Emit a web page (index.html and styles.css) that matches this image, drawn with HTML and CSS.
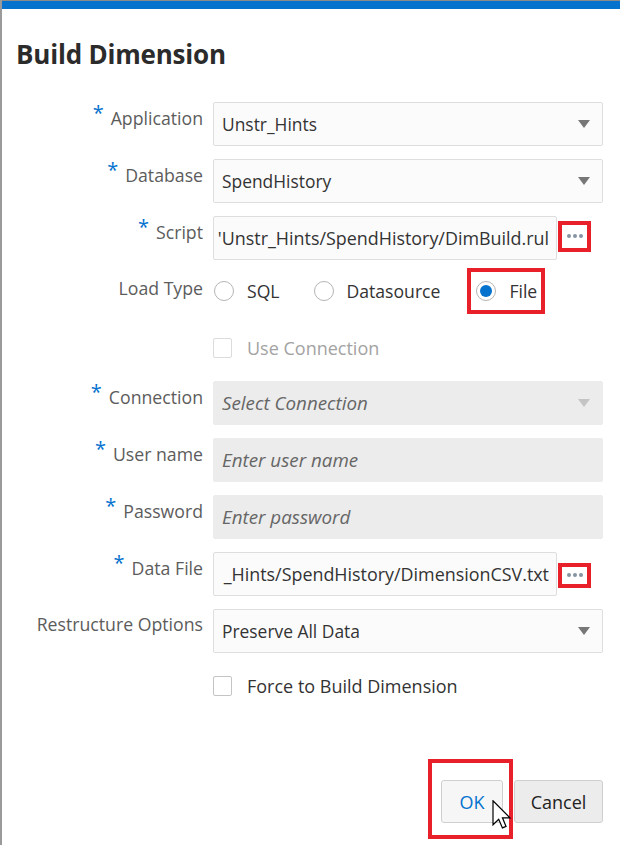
FILE: index.html
```html
<!DOCTYPE html>
<html>
<head>
<meta charset="utf-8">
<link rel="stylesheet" href="styles.css">
</head>
<body>
<div class="dialog">
  <div class="topbar"></div>
  <h1 class="title">Build Dimension</h1>
  <div class="form">
    <div class="row">
      <div class="label"><span class="req">*</span>Application</div>
      <div class="select"><span class="value">Unstr_Hints</span><span class="caret"></span></div>
    </div>
    <div class="row">
      <div class="label"><span class="req">*</span>Database</div>
      <div class="select"><span class="value">SpendHistory</span><span class="caret"></span></div>
    </div>
    <div class="row">
      <div class="label"><span class="req">*</span>Script</div>
      <div class="with-btn">
        <div class="input clip"><span class="value">'Unstr_Hints/SpendHistory/DimBuild.rul</span></div>
        <div class="ellipsis boxed"><span class="dot"></span><span class="dot"></span><span class="dot"></span></div>
      </div>
    </div>
    <div class="row row-radio">
      <div class="label label-plain">Load Type</div>
      <div class="radios">
        <label class="radio"><span class="circle"></span>SQL</label>
        <label class="radio"><span class="circle"></span>Datasource</label>
        <label class="radio radio-file boxed"><span class="circle checked"></span>File</label>
      </div>
    </div>
    <div class="row row-check">
      <div class="label"></div>
      <label class="check disabled"><span class="box"></span>Use Connection</label>
    </div>
    <div class="row">
      <div class="label"><span class="req">*</span>Connection</div>
      <div class="select off"><span class="ph">Select Connection</span><span class="caret light"></span></div>
    </div>
    <div class="row">
      <div class="label"><span class="req">*</span>User name</div>
      <div class="input off"><span class="ph">Enter user name</span></div>
    </div>
    <div class="row">
      <div class="label"><span class="req">*</span>Password</div>
      <div class="input off"><span class="ph">Enter password</span></div>
    </div>
    <div class="row">
      <div class="label"><span class="req">*</span>Data File</div>
      <div class="with-btn">
        <div class="input clip"><span class="value">_Hints/SpendHistory/DimensionCSV.txt</span></div>
        <div class="ellipsis boxed small"><span class="dot"></span><span class="dot"></span><span class="dot"></span></div>
      </div>
    </div>
    <div class="row">
      <div class="label label-plain">Restructure Options</div>
      <div class="select"><span class="value">Preserve All Data</span><span class="caret"></span></div>
    </div>
    <div class="row row-check">
      <div class="label"></div>
      <label class="check"><span class="box"></span>Force to Build Dimension</label>
    </div>
  </div>
  <div class="footer">
    <div class="btn-wrap">
      <button class="btn btn-ok">OK</button>
      <span class="ok-box"></span>
      <svg class="cursor" width="20" height="30" viewBox="0 0 13 20"><path d="M0.5 0.5 L0.5 16.5 L4.3 12.8 L6.8 18.6 L9.2 17.6 L6.8 11.9 L11.8 11.9 Z" fill="#fff" stroke="#000" stroke-width="0.8" stroke-linejoin="miter"/></svg>
    </div>
    <button class="btn btn-cancel">Cancel</button>
  </div>
</div>
</body>
</html>
```

FILE: styles.css
```css
html, body {
  margin: 0;
  padding: 0;
  background: #fff;
}
body {
  font-family: "Open Sans", "Noto Sans", sans-serif;
  width: 620px;
  height: 845px;
  overflow: hidden;
}
.dialog {
  height: 845px;
  box-sizing: border-box;
  border-left: 2px solid #9a9a9a;
  position: relative;
}
.topbar {
  height: 8px;
  background: #0572ce;
  border-top: 1px solid #8a8a8a;
}
.title {
  margin: 30px 0 0 14px;
  font-size: 26px;
  font-weight: 700;
  color: #2b2b2b;
  line-height: 30px;
  letter-spacing: -0.2px;
}
.form {
  margin-top: 33px;
  display: flex;
  flex-direction: column;
  gap: 13px;
}
.row {
  display: flex;
  align-items: flex-start;
  gap: 10px;
  height: 44px;
}
.row-radio { height: 42px; }
.row-check { height: 40px; align-items: center; }
.label {
  width: 201px;
  flex: none;
  text-align: right;
  font-size: 17.7px;
  color: #5c5c5c;
  padding-top: 3px;
  line-height: 26px;
  white-space: nowrap;
}
.label-plain { padding-top: 2px; }
.req {
  color: #0572ce;
  font-size: 20px;
  margin-right: 7px;
  position: relative;
  top: -5px;
}
.select, .input {
  box-sizing: border-box;
  width: 390px;
  height: 44px;
  border: 1px solid #dedede;
  border-radius: 2px;
  background: #fbfbfb;
  display: flex;
  align-items: center;
  padding: 0 12px 0 8px;
  font-size: 17.4px;
  color: #333;
}
.select { justify-content: space-between; }
.value { white-space: nowrap; }
.off {
  background: #ececec;
  border-color: #ececec;
}
.ph {
  font-style: italic;
  color: #666;
  font-size: 18.8px;
}
.caret {
  width: 0;
  height: 0;
  border-left: 6px solid transparent;
  border-right: 6px solid transparent;
  border-top: 8px solid #777;
}
.caret.light { border-top-color: #c4c4c4; }
.with-btn {
  display: flex;
  align-items: center;
  width: 390px;
}
.input.clip {
  width: 344px;
  overflow: hidden;
  justify-content: flex-end;
  padding: 0 7px 0 0;
  font-size: 17.9px;
}
.ellipsis {
  margin-left: 1px;
  box-sizing: border-box;
  width: 33px;
  height: 31px;
  margin-top: -4px;
  display: flex;
  align-items: center;
  justify-content: center;
  gap: 2px;
}
.ellipsis.small { height: 25px; margin-top: 2px; }
.boxed { border: 4px solid #e8202a; }
.dot {
  width: 4px;
  height: 4px;
  border-radius: 50%;
  background: #8794a3;
}
.radios {
  display: flex;
  align-items: center;
  height: 42px;
  margin-top: -3px;
}
.radio {
  display: flex;
  align-items: center;
  font-size: 17.6px;
  color: #333;
  margin-right: 34px;
}
.radio:first-child { margin-left: 1px; }
.circle {
  box-sizing: border-box;
  width: 20px;
  height: 20px;
  border: 1px solid #b5b5b5;
  border-radius: 50%;
  background: #fff;
  margin-right: 13px;
  display: flex;
  align-items: center;
  justify-content: center;
}
.circle.checked::after {
  content: "";
  width: 12px;
  height: 12px;
  border-radius: 50%;
  background: #0572ce;
}
.radio-file {
  box-sizing: border-box;
  height: 46px;
  padding: 0 4px 0 5px;
  margin-left: -7px;
  margin-right: 0;
}
.check {
  display: flex;
  align-items: center;
  font-size: 18px;
  color: #333;
}
.check .box {
  box-sizing: border-box;
  width: 19px;
  height: 20px;
  border: 1px solid #c4c4c4;
  border-radius: 2px;
  background: #fff;
  margin-right: 15px;
}
.check.disabled { color: #a3a3a3; }
.check.disabled .box { border-color: #dcdcdc; }
.footer {
  display: flex;
  justify-content: flex-end;
  gap: 11px;
  padding-right: 17px;
  margin-top: 74px;
}
.btn-wrap { position: relative; }
.btn {
  box-sizing: border-box;
  height: 43px;
  border: 1px solid #cfcfcf;
  border-radius: 3px;
  font-family: "Open Sans", "Noto Sans", sans-serif;
  font-size: 18px;
}
.btn-ok {
  width: 62px;
  background: #f6f6f6;
  color: #0572ce;
}
.btn-cancel {
  width: 89px;
  background: #ececec;
  color: #222;
}
.ok-box {
  position: absolute;
  left: -13px;
  top: -21px;
  width: 85px;
  height: 80px;
  box-sizing: border-box;
  border: 4px solid #e8202a;
}
.cursor {
  position: absolute;
  left: 51px;
  top: 20px;
}
```
